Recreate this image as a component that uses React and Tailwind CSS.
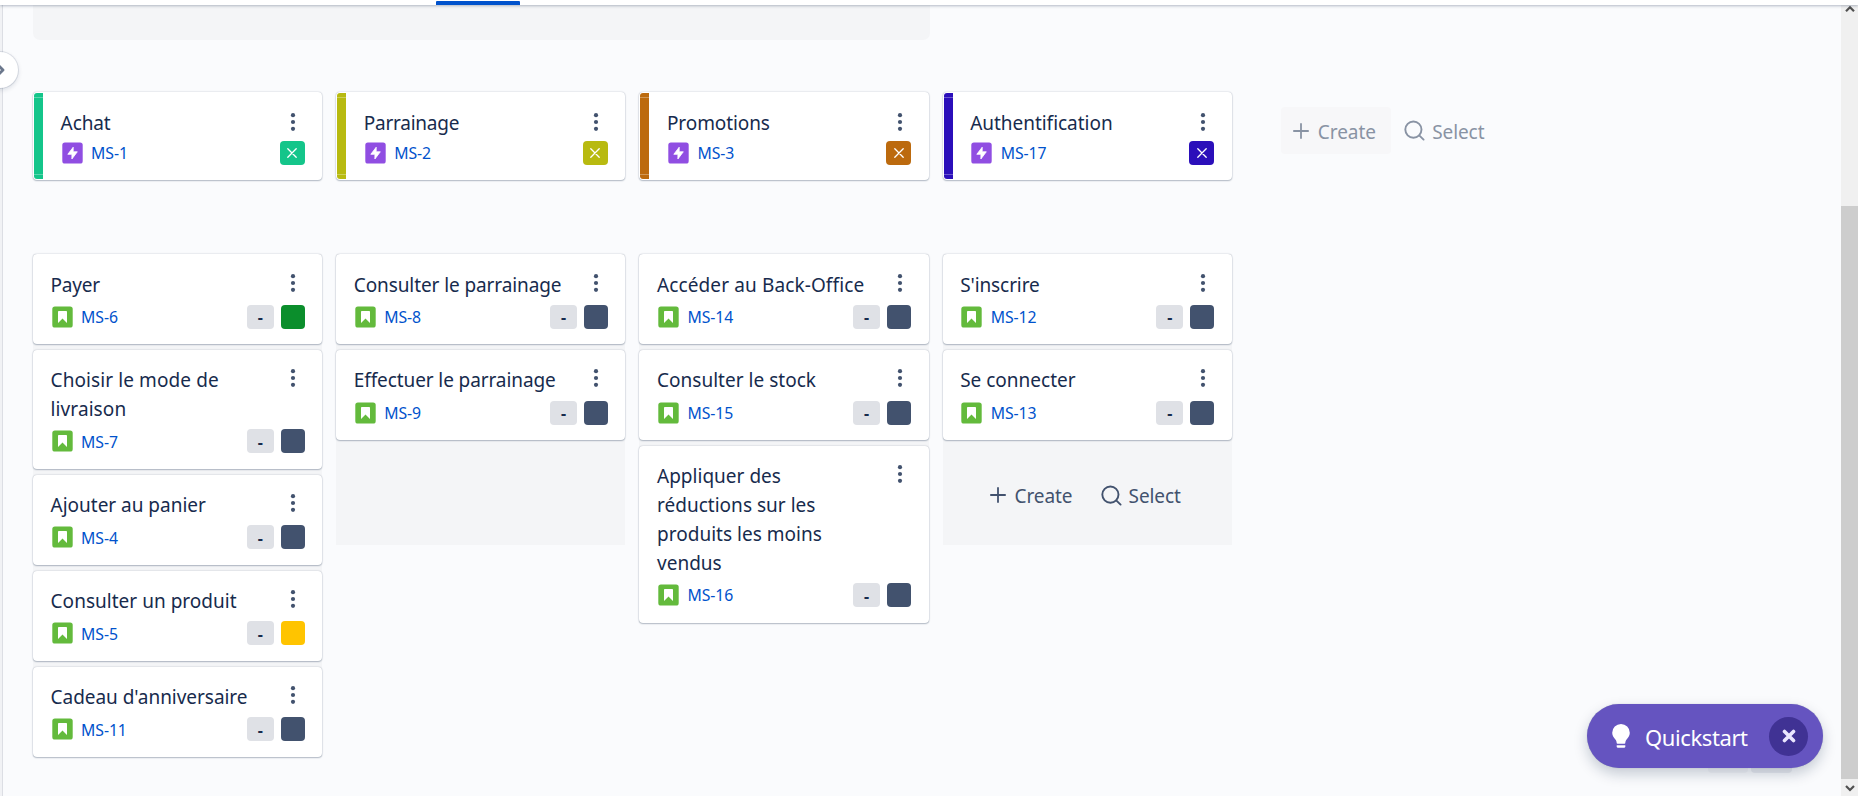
const epics = [
  { title: "Achat", id: "MS-1", bg: "bg-[#14c58a]", track: "tracking-[-0.1px]" },
  { title: "Parrainage", id: "MS-2", bg: "bg-[#b8ba10]", track: "tracking-[-0.25px]" },
  { title: "Promotions", id: "MS-3", bg: "bg-[#bc6a0e]", track: "tracking-[-0.1px]" },
  { title: "Authentification", id: "MS-17", bg: "bg-[#2b0fba]", track: "tracking-[-0.03px]" },
];

const columns = [
  {
    stories: [
      { title: "Payer", id: "MS-6", bg: "bg-[#0b8e2c]", track: "tracking-[-0.25px]" },
      { title: "Choisir le mode de livraison", id: "MS-7", track: "tracking-[0.09px]" },
      { title: "Ajouter au panier", id: "MS-4", track: "tracking-[-0.02px]" },
      { title: "Consulter un produit", id: "MS-5", bg: "bg-[#ffc400]", track: "tracking-[0.02px]" },
      { title: "Cadeau d'anniversaire", id: "MS-11", track: "tracking-[-0.04px]" },
    ],
  },
  {
    stories: [
      { title: "Consulter le parrainage", id: "MS-8" },
      { title: "Effectuer le parrainage", id: "MS-9" },
    ],
    footer: "empty",
  },
  {
    stories: [
      { title: "Accéder au Back-Office", id: "MS-14", track: "tracking-[0.12px]" },
      { title: "Consulter le stock", id: "MS-15", track: "tracking-[0.02px]" },
      { title: "Appliquer des réductions sur les produits les moins vendus", id: "MS-16", track: "tracking-[0.02px]" },
    ],
  },
  {
    stories: [
      { title: "S'inscrire", id: "MS-12" },
      { title: "Se connecter", id: "MS-13", track: "tracking-[0px]" },
    ],
    footer: "actions",
  },
];

const cardShadow = "rounded-[4px] bg-white shadow-[0_1px_1.5px_rgba(9,30,66,0.25),0_0_1.5px_rgba(9,30,66,0.3)]";

function Dots() {
  return (
    <svg width="6" height="20" viewBox="0 0 6 20" className="shrink-0 fill-[#42526e]">
      <circle cx="3" cy="3.2" r="2.1" />
      <circle cx="3" cy="10" r="2.1" />
      <circle cx="3" cy="16.8" r="2.1" />
    </svg>
  );
}

function EpicIcon() {
  return (
    <svg width="21" height="22" viewBox="0 0 21 22" className="shrink-0">
      <rect x="0.3" y="0.5" width="20.4" height="21" rx="2.6" fill="#904ee2" />
      <path d="M11.2 5.2v4.6h4.1L9.9 17v-4.7H5.8z" fill="#fff" stroke="#fff" strokeWidth="0.8" strokeLinejoin="round" />
    </svg>
  );
}

function StoryIcon() {
  return (
    <svg width="21" height="22" viewBox="0 0 21 22" className="shrink-0">
      <rect x="0.3" y="0.5" width="20.4" height="21" rx="2.6" fill="#63ba3c" />
      <path d="M6 5.8q0-.8.8-.8h7.4q.8 0 .8.8V17l-4.5-4.4L6 17z" fill="#fff" />
    </svg>
  );
}

function PlusIcon() {
  return (
    <svg width="16" height="16" viewBox="0 0 16 16" fill="none" stroke="currentColor" strokeWidth="1.8" strokeLinecap="round" className="shrink-0">
      <path d="M8 .9v14.2M.9 8h14.2" />
    </svg>
  );
}

function SearchIcon() {
  return (
    <svg width="21" height="21" viewBox="0 0 21 21" fill="none" stroke="currentColor" strokeWidth="1.9" strokeLinecap="round" className="shrink-0">
      <circle cx="9.4" cy="9.6" r="8.1" />
      <path d="M15.2 15.4l4.4 4.2" />
    </svg>
  );
}

function EpicCard({ epic }) {
  return (
    <div className={`flex h-[88px] w-[289.2px] overflow-hidden ${cardShadow}`}>
      <div className={`my-[1px] ml-[1px] flex w-[9px] flex-col justify-between rounded-l-[3px] py-[4px] ${epic.bg}`}>
        <div className="h-px bg-white/30" />
        <div className="h-px bg-white/30" />
      </div>
      <div className="flex flex-1 flex-col pr-[17.5px] pt-[15.5px] pl-[17.6px]">
        <div className="flex items-start justify-between pr-[8.5px]">
          <div className={`pt-[1px] text-[19px] leading-[28.8px] whitespace-nowrap ${epic.track}`}>{epic.title}</div>
          <div className="mt-[4px]"><Dots /></div>
        </div>
        <div className="mt-[3.4px] flex h-[24px] items-center">
          <div className="ml-[1px]"><EpicIcon /></div>
          <span className="mt-[2px] ml-[8.5px] text-[15.8px] tracking-[-0.1px] text-[#0052cc]">{epic.id}</span>
          <div className={`ml-auto flex h-[24px] w-[25px] items-center justify-center rounded-[4px] ${epic.bg}`}>
            <svg width="10" height="10" viewBox="0 0 10 10" stroke="#fff" strokeWidth="1.3" strokeLinecap="round">
              <path d="M.8.8l8.4 8.4M9.2.8L.8 9.2" />
            </svg>
          </div>
        </div>
      </div>
    </div>
  );
}

function StoryCard({ story }) {
  return (
    <div className={`flex w-[289.2px] flex-col pt-[15.5px] pr-[17.4px] pb-[15.7px] pl-[17.6px] ${cardShadow}`}>
      <div className="flex items-start justify-between pr-[8.5px]">
        <div className={`w-[219px] pt-[1px] text-[19px] leading-[28.8px] ${story.track || "tracking-[-0.1px]"}`}>{story.title}</div>
        <div className="mt-[3px]"><Dots /></div>
      </div>
      <div className="mt-[5.4px] flex h-[24px] items-center">
        <div className="ml-[1px]"><StoryIcon /></div>
        <span className="mt-[2px] ml-[8.5px] text-[15.8px] tracking-[-0.1px] text-[#0052cc]">{story.id}</span>
        <div className="ml-auto flex h-[24px] w-[27px] items-center justify-center rounded-[4px] bg-[#dfe1e6] pt-[1px] text-[16px] font-bold">-</div>
        <div className={`ml-[7px] h-[24px] w-[24px] rounded-[4px] ${story.bg || "bg-[#42526e]"}`} />
      </div>
    </div>
  );
}

export default function App() {
  return (
    <div className="h-[801px] w-[1873px] overflow-hidden bg-white font-['Noto_Sans','Open_Sans',sans-serif] text-[#172b4d]">
      <div className="relative flex h-[796px] w-[1858px] flex-col overflow-hidden">
        <header className="relative z-10 flex h-[5px] shrink-0 items-end bg-white shadow-[0_1px_3px_rgba(9,30,66,0.3)]">
          <div className="ml-[436px] h-[4px] w-[84px] rounded-t-[1px] bg-[#0052cc]" />
        </header>
        <div className="flex flex-1">
          <div className="w-[3px] border-r border-[#dcdee4] bg-[#f1f2f5]" />
          <main className="flex flex-1 flex-col bg-[#fafbfd] pl-[30px]">
            <div className="h-[35px] w-[897px] rounded-b-[7px] bg-[#f4f5f7]" />
            <div className="mt-[52px] flex items-start gap-[14px]">
              {epics.map((e) => (
                <EpicCard key={e.id} epic={e} />
              ))}
              <div className="mt-[15px] ml-[35px] flex h-[47px] items-center text-[#8993a4]">
                <div className="flex h-full w-[110px] items-center rounded-[4px] bg-[#f7f7f9] pl-[12px]">
                  <PlusIcon />
                  <span className="mt-[4px] ml-[9px] text-[19px] tracking-[-0.05px]">Create</span>
                </div>
                <div className="flex items-center pl-[13.5px]">
                  <SearchIcon />
                  <span className="mt-[4px] ml-[7px] text-[19px] tracking-[-0.1px]">Select</span>
                </div>
              </div>
            </div>
            <div className="mt-[74px] flex items-start gap-[14px]">
              {columns.map((c, i) => (
                <div key={i} className="flex w-[289.2px] flex-col gap-[5.6px] bg-[#f4f5f7]">
                  {c.stories.map((s) => (
                    <StoryCard key={s.id} story={s} />
                  ))}
                  {c.footer && (
                    <div className="flex h-[98.6px] items-center pl-[47px] text-[#42526e]">
                      {c.footer === "actions" && (
                        <>
                          <PlusIcon />
                          <span className="mt-[3px] ml-[9px] text-[19px] tracking-[-0.1px]">Create</span>
                          <div className="mr-[51px] ml-auto flex items-center">
                            <SearchIcon />
                            <span className="mt-[3px] ml-[7px] text-[19px] tracking-[-0.1px]">Select</span>
                          </div>
                        </>
                      )}
                    </div>
                  )}
                </div>
              ))}
            </div>
          </main>
          <div className="flex w-[17px] flex-col bg-[#f0f0f0]">
            <div className="flex h-[201px] justify-center">
              <svg width="10" height="8" viewBox="0 0 10 8" fill="none" stroke="#505050" strokeWidth="2.2">
                <path d="M1 6.2l4-4 4 4" />
              </svg>
            </div>
            <div className="h-[573px] bg-[#cdcdcd]" />
            <div className="flex h-[17px] items-center justify-center">
              <svg width="10" height="8" viewBox="0 0 10 8" fill="none" stroke="#505050" strokeWidth="2.2">
                <path d="M1 2l4 4 4-4" />
              </svg>
            </div>
          </div>
        </div>

        <div className="absolute top-[51.5px] -left-[18.5px] flex h-[36px] w-[36px] items-center rounded-full bg-white pl-[14px] shadow-[0_0_0_1px_rgba(9,30,66,0.1),0_2px_5px_rgba(9,30,66,0.14)]">
          <svg width="10" height="10" viewBox="0 0 10 10" fill="none" stroke="#6b778c" strokeWidth="2.8" strokeLinejoin="round">
            <path d="M3 1l4 4-4 4" />
          </svg>
        </div>

        <div className="absolute top-[755px] left-[1708px] h-[18px] w-[40px] rounded-[4px] bg-[#f3f4f7]" />
        <div className="absolute top-[755px] left-[1751px] h-[18px] w-[41px] rounded-[4px] bg-[#e9ebf0]" />
        <div className="absolute top-[704px] left-[1587px] flex h-[64px] w-[236px] items-center rounded-full bg-[#6554c0] pr-[15px] pl-[25px] text-white shadow-[0_6px_14px_rgba(9,30,66,0.22),0_0_1px_rgba(9,30,66,0.3)]">
          <svg width="18" height="24" viewBox="0 0 18 24" fill="#fff">
            <path d="M9 0a8.800 8.800 0 0 0-8.800 8.800c0 3 1.600 4.800 3.200 6.700C4.300 16.700 4.600 17.700 4.700 19c.05.5.3.7.8.7h7c.5 0 .75-.2.8-.7.1-1.300.4-2.300 1.300-3.500 1.600-1.900 3.200-3.700 3.200-6.700A8.800 8.800 0 0 0 9 0z" />
            <path d="M4.700 21.200h8.600v1.300q0 1.300-1.300 1.300H6q-1.300 0-1.300-1.300z" />
          </svg>
          <span className="mt-[2px] ml-[15px] text-[22px] tracking-[-0.4px]">Quickstart</span>
          <div className="ml-auto flex size-[39px] items-center justify-center rounded-full bg-[#403294]">
            <svg width="14" height="14" viewBox="0 0 14 14" stroke="#eae6ff" strokeWidth="3.6" strokeLinecap="round">
              <path d="M2.500 2.500l9 9M11.500 2.500l-9 9" />
            </svg>
          </div>
        </div>
      </div>
    </div>
  );
}
